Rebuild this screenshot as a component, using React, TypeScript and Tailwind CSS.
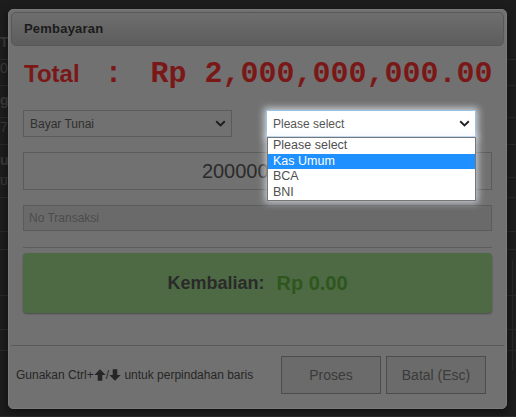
import React from 'react';

// background table rows peeking out beside the modal
const bgRows: { h: number; text: string; bold?: boolean }[] = [
  { h: 60, text: 'Tanggal', bold: true },
  { h: 26, text: '01' },
  { h: 32, text: 'ggal', bold: true },
  { h: 27, text: '7-05' },
  { h: 33, text: 'ur', bold: true },
  { h: 20, text: 'ur' },
  { h: 34, text: '' },
  { h: 18, text: '' },
  { h: 46, text: '' },
  { h: 34, text: '' },
  { h: 21, text: '' },
  { h: 66, text: '' },
];

function Chevron({ className }: { className?: string }) {
  return (
    <svg className={className} width="11" height="7" viewBox="0 0 11 7" fill="none">
      <path d="M1.2 1.2 L5.5 5.4 L9.8 1.2" stroke="currentColor" strokeWidth="1.9" />
    </svg>
  );
}

function ArrowUp() {
  return (
    <svg width="12" height="12" viewBox="0 0 11 11" className="inline-block align-[-2px]">
      <path d="M5.5 0.3 L10.7 5.5 H7.6 V10.7 H3.4 V5.5 H0.3 Z" fill="currentColor" />
    </svg>
  );
}

function ArrowDown() {
  return (
    <svg width="12" height="12" viewBox="0 0 11 11" className="inline-block align-[-2px]">
      <path d="M5.5 10.7 L10.7 5.5 H7.6 V0.3 H3.4 V5.5 H0.3 Z" fill="currentColor" />
    </svg>
  );
}

export default function App() {
  const options = ['Please select', 'Kas Umum', 'BCA', 'BNI'];

  return (
    <div className="relative w-[516px] h-[417px] overflow-hidden bg-[#1d1d1d] font-['Liberation_Sans',Arial,sans-serif]">
      {/* dimmed page behind */}
      <div className="flex flex-col">
        {bgRows.map((r, i) => (
          <div
            key={i}
            style={{ height: r.h }}
            className="flex items-end border-b border-[#2a2a2a] pb-[6px] text-[14px] text-[#3a3a3a]"
          >
            <span className={r.bold ? 'font-bold' : ''}>{r.text}</span>
          </div>
        ))}
      </div>
      <div className="absolute right-[3px] top-[260px] h-[110px] border-l border-[#2a2a2a]" />

      {/* modal */}
      <div className="absolute left-[8px] top-[9px] w-[499px] h-[400px] flex flex-col rounded-[5px] border border-[#7b7b7b] bg-[#717171] shadow-[0_3px_10px_rgba(0,0,0,0.5)]">
        <div className="mx-[2px] mt-[2px] h-[34px] flex items-center rounded-[5px] border border-[#585858] bg-gradient-to-b from-[#6e6e6e] to-[#5d5d5d] pl-[12px]">
          <span className="text-[13px] font-bold text-[#1b1b1b] tracking-[0.2px]">Pembayaran</span>
        </div>

        <div className="flex flex-col px-[14px]">
          <div className="mt-[8px] h-[40px] whitespace-nowrap font-['Liberation_Mono','Courier_New',monospace] text-[30px] font-bold leading-[40px] text-[#7a1818]">
            <span className="ml-[1px] font-['Liberation_Sans',Arial,sans-serif] text-[24px]">Total</span>
            <span className="ml-[25px]">:</span>
            <span className="ml-[28px]">Rp 2,000,000,000.00</span>
          </div>

          <div className="mt-[16px] flex">
            <div className="w-[209px] h-[27px] flex items-center justify-between border border-[#5b5b5b] bg-[#717171] pl-[6px] pr-[5px]">
              <span className="text-[12px] text-[#2f2f2f]">Bayar Tunai</span>
              <Chevron className="text-[#1e1e1e]" />
            </div>

            <div className="relative z-10 ml-[34px] w-[210px]">
              <div className="h-[27px] flex items-center justify-between border border-[#9cc3e6] bg-white pl-[6px] pr-[5px] shadow-[0_0_7px_2px_rgba(235,245,255,0.75)]">
                <span className="text-[12px] text-[#555]">Please select</span>
                <Chevron className="text-[#222]" />
              </div>
              <div className="absolute left-[1px] top-[27px] w-[209px] border border-[#767676] bg-white shadow-[0_0_7px_2px_rgba(235,245,255,0.7)]">
                {options.map((o, i) => (
                  <div
                    key={o}
                    className={
                      'h-[15.5px] pl-[5px] text-[12.5px] leading-[15.5px] ' +
                      (i === 1 ? 'bg-[#1e90ff] text-white' : 'text-[#505050]')
                    }
                  >
                    {o}
                  </div>
                ))}
              </div>
            </div>
          </div>

          <div className="mt-[15px] h-[38px] flex items-center justify-center border border-[#5b5b5b] bg-[#717171] text-[20px] text-[#2b2b2b]">
            2000000000
          </div>

          <div className="mt-[15px] h-[26px] flex items-center border border-[#5b5b5b] bg-[#6a6a6a] pl-[5px] text-[12px] text-[#4c4c4c]">
            No Transaksi
          </div>

          <div className="mt-[16px] border-t border-[#5d5d5d]" />

          <div className="mt-[5px] h-[60px] flex items-center justify-center rounded-[4px] bg-[#4e6a45] shadow-[0_1px_2px_rgba(0,0,0,0.35)]">
            <span className="text-[18px] font-bold text-[#2a2a2a]">Kembalian:</span>
            <span className="ml-[12px] text-[20px] font-bold text-[#2f561d]">Rp 0.00</span>
          </div>
        </div>

        <div className="flex-1" />

        <div className="mx-[2px] h-[63px] flex items-start border-t border-[#5a5a5a] pt-[10px] pr-[18px]">
          <div className="h-[38px] flex items-center pl-[5px] text-[12px] text-[#262626]">
            <span>
              Gunakan Ctrl+<ArrowUp />/<ArrowDown /> untuk perpindahan baris
            </span>
          </div>
          <div className="flex-1" />
          <button className="w-[100px] h-[38px] border border-[#4c4c4c] bg-[#6b6b6b] text-[14px] text-[#3a3a3a]">
            Proses
          </button>
          <button className="ml-[5px] w-[100px] h-[38px] border border-[#4c4c4c] bg-[#6b6b6b] text-[14px] text-[#3a3a3a]">
            Batal (Esc)
          </button>
        </div>
      </div>
    </div>
  );
}
